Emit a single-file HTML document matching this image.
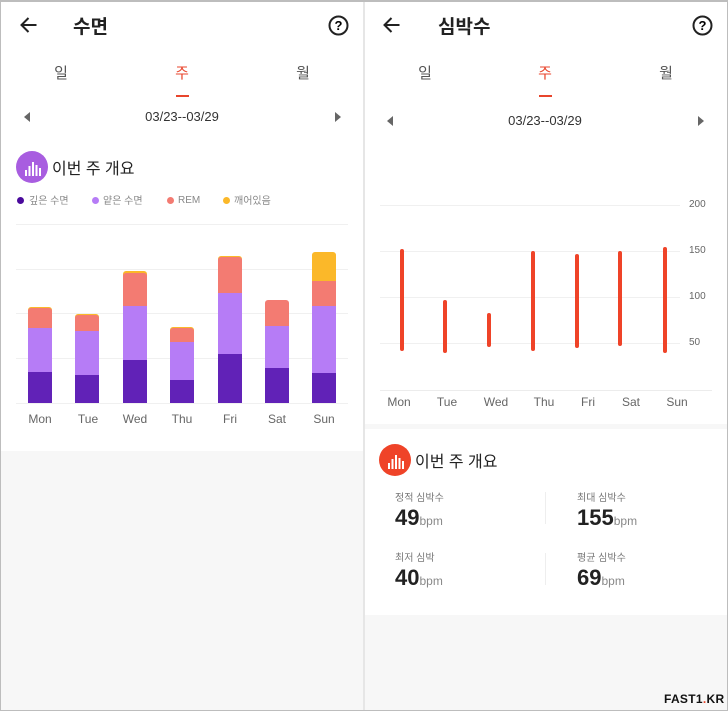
<!DOCTYPE html>
<html><head><meta charset="utf-8"><style>
*{margin:0;padding:0;box-sizing:border-box}
body{width:728px;height:711px;position:relative;overflow:hidden;background:#f7f7f7;font-family:"Liberation Sans","Noto Sans CJK KR",sans-serif;color:#222;line-height:1.2}
.a{position:absolute}
.t{position:absolute;white-space:nowrap;transform:translateX(-50%)}
.g{position:absolute;height:1px;background:#f0f0f0}
.dl{font-size:11px;color:#888}
</style></head><body>
<div class="a" style="left:0;top:0;width:728px;height:711px;border:1px solid #bdbdbd;border-top-width:2px;z-index:10;pointer-events:none"></div>
<div class="a" style="left:363px;top:0;width:2px;height:711px;background:#e6e6e6;z-index:5"></div>

<!-- LEFT PANEL -->
<div class="a" style="left:0;top:0;width:363px;height:451px;background:#fff"></div>
<svg class="a" style="left:19px;top:15px" width="20" height="20" viewBox="0 0 20 20"><path d="M17.5 10H3M9.5 3L2.5 10L9.5 17" fill="none" stroke="#222" stroke-width="2"/></svg>
<div class="a" style="left:73px;top:17px;font-size:19px;font-weight:bold">수면</div>
<svg class="a" style="left:328px;top:15px" width="21" height="21" viewBox="0 0 21 21"><circle cx="10.5" cy="10.5" r="9" fill="none" stroke="#222" stroke-width="2"/><text x="10.5" y="15" font-size="13" font-weight="bold" text-anchor="middle" font-family="Liberation Sans">?</text></svg>
<div class="t" style="left:61px;top:65px;font-size:15px;color:#555">일</div>
<div class="t" style="left:182px;top:65px;font-size:15px;color:#e8452c">주</div>
<div class="t" style="left:303px;top:65px;font-size:15px;color:#555">월</div>
<div class="a" style="left:176px;top:95px;width:13px;height:2px;background:#e8452c"></div>
<div class="a" style="left:24px;top:112px;width:0;height:0;border-top:5px solid transparent;border-bottom:5px solid transparent;border-right:6px solid #666"></div>
<div class="a" style="left:335px;top:112px;width:0;height:0;border-top:5px solid transparent;border-bottom:5px solid transparent;border-left:6px solid #666"></div>
<div class="t" style="left:182px;top:109px;font-size:13px;color:#333">03/23--03/29</div>
<div class="a" style="left:16px;top:151px;width:32px;height:32px;border-radius:50%;background:#a85de0"></div>
<svg class="a" style="left:16px;top:151px" width="32" height="32"><g fill="#fff"><rect x="9" y="19" width="2" height="6"/><rect x="12.5" y="15" width="2" height="10"/><rect x="16" y="11" width="2" height="14"/><rect x="19.5" y="14" width="2" height="11"/><rect x="23" y="17" width="2" height="8"/></g></svg>
<div class="a" style="left:52px;top:160px;font-size:16px;color:#222">이번 주 개요</div>
<div class="a" style="left:17px;top:197px;width:7px;height:7px;border-radius:50%;background:#4a0a9c"></div>
<div class="a dl" style="left:29px;top:196px;font-size:10px">깊은 수면</div>
<div class="a" style="left:92px;top:197px;width:7px;height:7px;border-radius:50%;background:#b67cf6"></div>
<div class="a dl" style="left:103px;top:196px;font-size:10px">얕은 수면</div>
<div class="a" style="left:167px;top:197px;width:7px;height:7px;border-radius:50%;background:#f37b72"></div>
<div class="a dl" style="left:178px;top:195px;font-size:10px">REM</div>
<div class="a" style="left:223px;top:197px;width:7px;height:7px;border-radius:50%;background:#fbb829"></div>
<div class="a dl" style="left:234px;top:196px;font-size:10px">깨어있음</div>
<div class="g" style="left:16px;top:224px;width:332px"></div>
<div class="g" style="left:16px;top:269px;width:332px"></div>
<div class="g" style="left:16px;top:313px;width:332px"></div>
<div class="g" style="left:16px;top:358px;width:332px"></div>
<div class="g" style="left:16px;top:403px;width:332px"></div>
<svg class="a" style="left:0;top:0" width="363" height="420">
<g><rect x="28" y="307" width="24" height="96" rx="3" fill="#fbb829"/><rect x="28" y="308" width="24" height="95" rx="3" fill="#f37b72"/><rect x="28" y="328" width="24" height="75" fill="#b67cf6"/><rect x="28" y="372" width="24" height="31" fill="#6122b7"/></g>
<g><rect x="75" y="314" width="24" height="89" rx="3" fill="#fbb829"/><rect x="75" y="315" width="24" height="88" rx="3" fill="#f37b72"/><rect x="75" y="331" width="24" height="72" fill="#b67cf6"/><rect x="75" y="375" width="24" height="28" fill="#6122b7"/></g>
<g><rect x="123" y="271" width="24" height="132" rx="3" fill="#fbb829"/><rect x="123" y="273" width="24" height="130" rx="3" fill="#f37b72"/><rect x="123" y="306" width="24" height="97" fill="#b67cf6"/><rect x="123" y="360" width="24" height="43" fill="#6122b7"/></g>
<g><rect x="170" y="327" width="24" height="76" rx="3" fill="#fbb829"/><rect x="170" y="328" width="24" height="75" rx="3" fill="#f37b72"/><rect x="170" y="342" width="24" height="61" fill="#b67cf6"/><rect x="170" y="380" width="24" height="23" fill="#6122b7"/></g>
<g><rect x="218" y="256" width="24" height="147" rx="3" fill="#fbb829"/><rect x="218" y="257" width="24" height="146" rx="3" fill="#f37b72"/><rect x="218" y="293" width="24" height="110" fill="#b67cf6"/><rect x="218" y="354" width="24" height="49" fill="#6122b7"/></g>
<g><rect x="265" y="300" width="24" height="103" rx="3" fill="#f37b72"/><rect x="265" y="326" width="24" height="77" fill="#b67cf6"/><rect x="265" y="368" width="24" height="35" fill="#6122b7"/></g>
<g><rect x="312" y="252" width="24" height="151" rx="3" fill="#fbb829"/><rect x="312" y="281" width="24" height="122" fill="#f37b72"/><rect x="312" y="306" width="24" height="97" fill="#b67cf6"/><rect x="312" y="373" width="24" height="30" fill="#6122b7"/></g>
</svg>
<div class="t" style="left:40px;top:412px;font-size:12px;color:#666">Mon</div>
<div class="t" style="left:88px;top:412px;font-size:12px;color:#666">Tue</div>
<div class="t" style="left:135px;top:412px;font-size:12px;color:#666">Wed</div>
<div class="t" style="left:182px;top:412px;font-size:12px;color:#666">Thu</div>
<div class="t" style="left:230px;top:412px;font-size:12px;color:#666">Fri</div>
<div class="t" style="left:277px;top:412px;font-size:12px;color:#666">Sat</div>
<div class="t" style="left:324px;top:412px;font-size:12px;color:#666">Sun</div>

<!-- RIGHT PANEL -->
<div class="a" style="left:365px;top:0;width:363px;height:424px;background:#fff"></div>
<div class="a" style="left:365px;top:429px;width:363px;height:186px;background:#fff"></div>
<svg class="a" style="left:382px;top:15px" width="20" height="20" viewBox="0 0 20 20"><path d="M17.5 10H3M9.5 3L2.5 10L9.5 17" fill="none" stroke="#222" stroke-width="2"/></svg>
<div class="a" style="left:438px;top:17px;font-size:19px;font-weight:bold">심박수</div>
<svg class="a" style="left:692px;top:15px" width="21" height="21" viewBox="0 0 21 21"><circle cx="10.5" cy="10.5" r="9" fill="none" stroke="#222" stroke-width="2"/><text x="10.5" y="15" font-size="13" font-weight="bold" text-anchor="middle" font-family="Liberation Sans">?</text></svg>
<div class="t" style="left:425px;top:65px;font-size:15px;color:#555">일</div>
<div class="t" style="left:545px;top:65px;font-size:15px;color:#e8452c">주</div>
<div class="t" style="left:666px;top:65px;font-size:15px;color:#555">월</div>
<div class="a" style="left:539px;top:95px;width:13px;height:2px;background:#e8452c"></div>
<div class="a" style="left:387px;top:116px;width:0;height:0;border-top:5px solid transparent;border-bottom:5px solid transparent;border-right:6px solid #666"></div>
<div class="a" style="left:698px;top:116px;width:0;height:0;border-top:5px solid transparent;border-bottom:5px solid transparent;border-left:6px solid #666"></div>
<div class="t" style="left:545px;top:113px;font-size:13px;color:#333">03/23--03/29</div>
<div class="g" style="left:380px;top:205px;width:300px"></div>
<div class="g" style="left:380px;top:251px;width:300px"></div>
<div class="g" style="left:380px;top:297px;width:300px"></div>
<div class="g" style="left:380px;top:343px;width:300px"></div>
<div class="g" style="left:380px;top:390px;width:332px;background:#ececec"></div>
<div class="a" style="left:689px;top:199px;font-size:10px;color:#666">200</div>
<div class="a" style="left:689px;top:245px;font-size:10px;color:#666">150</div>
<div class="a" style="left:689px;top:291px;font-size:10px;color:#666">100</div>
<div class="a" style="left:689px;top:337px;font-size:10px;color:#666">50</div>
<svg class="a" style="left:365px;top:0" width="363" height="400"><g stroke="#ef4328" stroke-width="4" stroke-linecap="round">
<line x1="37" y1="251" x2="37" y2="349"/>
<line x1="80" y1="302" x2="80" y2="351"/>
<line x1="124" y1="315" x2="124" y2="345"/>
<line x1="168" y1="253" x2="168" y2="349"/>
<line x1="212" y1="256" x2="212" y2="346"/>
<line x1="255" y1="253" x2="255" y2="344"/>
<line x1="300" y1="249" x2="300" y2="351"/>
</g></svg>
<div class="t" style="left:399px;top:395px;font-size:12px;color:#666">Mon</div>
<div class="t" style="left:447px;top:395px;font-size:12px;color:#666">Tue</div>
<div class="t" style="left:496px;top:395px;font-size:12px;color:#666">Wed</div>
<div class="t" style="left:544px;top:395px;font-size:12px;color:#666">Thu</div>
<div class="t" style="left:588px;top:395px;font-size:12px;color:#666">Fri</div>
<div class="t" style="left:631px;top:395px;font-size:12px;color:#666">Sat</div>
<div class="t" style="left:677px;top:395px;font-size:12px;color:#666">Sun</div>

<div class="a" style="left:379px;top:444px;width:32px;height:32px;border-radius:50%;background:#ef4328"></div>
<svg class="a" style="left:379px;top:444px" width="32" height="32"><g fill="#fff"><rect x="9" y="19" width="2" height="6"/><rect x="12.5" y="15" width="2" height="10"/><rect x="16" y="11" width="2" height="14"/><rect x="19.5" y="14" width="2" height="11"/><rect x="23" y="17" width="2" height="8"/></g></svg>
<div class="a" style="left:415px;top:453px;font-size:16px;color:#222">이번 주 개요</div>
<div class="a" style="left:545px;top:492px;width:1px;height:32px;background:#eee"></div>
<div class="a" style="left:545px;top:553px;width:1px;height:32px;background:#eee"></div>
<div class="a" style="left:395px;top:493px;font-size:10px;color:#777">정적 심박수</div>
<div class="a" style="left:395px;top:505px;font-size:22px;font-weight:bold;color:#222">49<span style="font-size:12px;font-weight:normal;color:#888">bpm</span></div>
<div class="a" style="left:577px;top:493px;font-size:10px;color:#777">최대 심박수</div>
<div class="a" style="left:577px;top:505px;font-size:22px;font-weight:bold;color:#222">155<span style="font-size:12px;font-weight:normal;color:#888">bpm</span></div>
<div class="a" style="left:395px;top:553px;font-size:10px;color:#777">최저 심박</div>
<div class="a" style="left:395px;top:565px;font-size:22px;font-weight:bold;color:#222">40<span style="font-size:12px;font-weight:normal;color:#888">bpm</span></div>
<div class="a" style="left:577px;top:553px;font-size:10px;color:#777">평균 심박수</div>
<div class="a" style="left:577px;top:565px;font-size:22px;font-weight:bold;color:#222">69<span style="font-size:12px;font-weight:normal;color:#888">bpm</span></div>
<div class="a" style="left:664px;top:692px;font-size:12px;font-weight:bold;color:#111;letter-spacing:0.3px">FAST1<span style="color:#e8452c">.</span>KR</div>
</body></html>
